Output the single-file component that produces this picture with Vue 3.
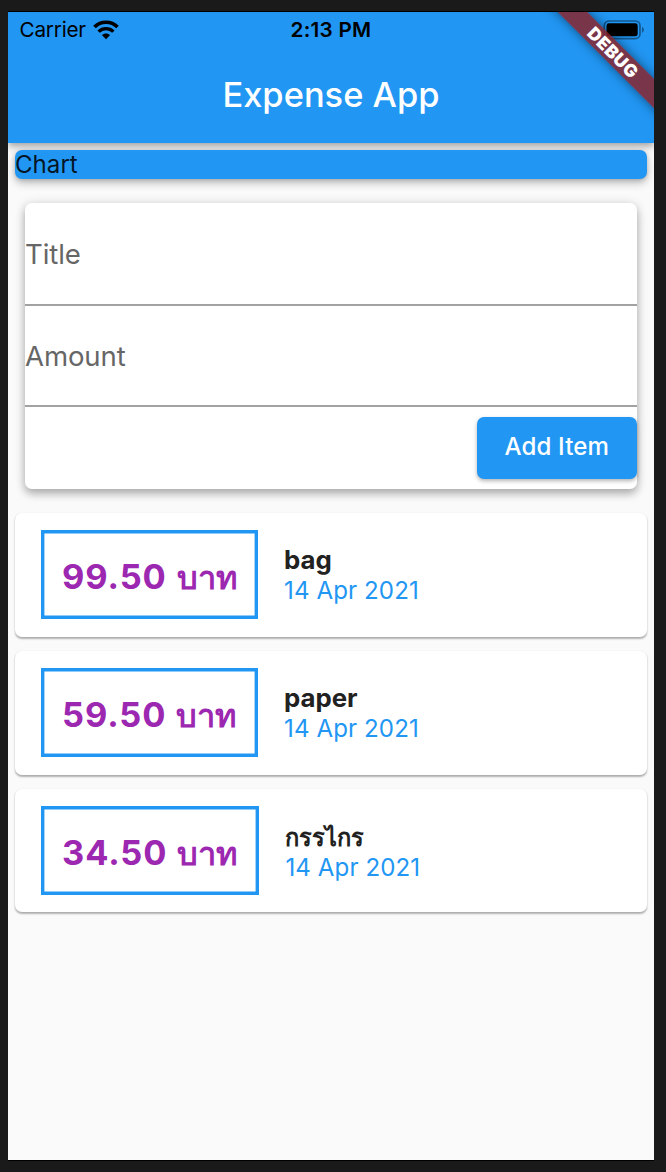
<script setup>
import { ref } from 'vue'

const title = ref('')
const amount = ref('')

const transactions = ref([
  { id: 1, title: 'bag', amount: 99.5, date: '14 Apr 2021', boxWidth: 217 },
  { id: 2, title: 'paper', amount: 59.5, date: '14 Apr 2021', boxWidth: 217 },
  { id: 3, title: 'กรรไกร', amount: 34.5, date: '14 Apr 2021', boxWidth: 218.4 }
])

const isThai = (text) => /[\u0E00-\u0E7F]/.test(text)

const addItem = () => {
  const value = Number(amount.value)
  if (!title.value || !(value > 0)) return

  transactions.value.push({
    id: Date.now(),
    title: title.value,
    amount: value,
    date: '14 Apr 2021',
    boxWidth: 217
  })
  title.value = ''
  amount.value = ''
}
</script>

<template>
  <div class="simulator">
    <div class="screen">
      <header class="app-bar">
        <div class="status">
          <div class="status__left">
            <span class="status__carrier">Carrier</span>
            <svg class="status__wifi" width="26" height="20" viewBox="0 0 26 20">
              <path d="M1.5 7.1C7.7 .6 18.3 .6 24.5 7.1" fill="none" stroke="#000" stroke-width="3.6" />
              <path d="M5.6 11.6C9.7 7.6 16.3 7.6 20.4 11.6" fill="none" stroke="#000" stroke-width="3.4" />
              <path d="M13 19.3L8.9 15.1C11.2 13 14.8 13 17.1 15.1Z" />
            </svg>
          </div>
          <span class="status__time">2:13 PM</span>
          <svg class="status__battery" width="42" height="20" viewBox="0 0 42 20">
            <rect x="1.2" y="1" width="35.8" height="17.6" rx="4.6" fill="none" stroke="#000" stroke-opacity=".42" stroke-width="1.7" />
            <rect x="3.5" y="3.3" width="31.2" height="13" rx="2.4" />
            <path d="M39.2 6.8C41.2 7.6 41.2 12 39.2 12.8Z" fill-opacity=".5" />
          </svg>
        </div>
        <h1 class="app-bar__title">Expense App</h1>
      </header>

      <main class="body">
        <section class="chart">Chart</section>

        <form class="entry" @submit.prevent="addItem">
          <input v-model="title" class="entry__field" placeholder="Title">
          <input v-model="amount" class="entry__field" placeholder="Amount">
          <button class="entry__button" type="submit">Add Item</button>
        </form>

        <ul class="list">
          <li v-for="tx in transactions" :key="tx.id" class="item">
            <div class="item__amount" :style="{ width: tx.boxWidth + 'px' }">
              <span class="item__number">{{ tx.amount.toFixed(2) }}</span>
              <span class="item__currency">บาท</span>
            </div>
            <div class="item__info">
              <div class="item__title" :class="{ 'item__title--thai': isThai(tx.title) }">{{ tx.title }}</div>
              <div class="item__date">{{ tx.date }}</div>
            </div>
          </li>
        </ul>
      </main>

      <div class="debug"><span>DEBUG</span></div>
    </div>
  </div>
</template>

<style>
body {
  margin: 0;
  background: #1a1a1a;
}
</style>

<style scoped>
.simulator {
  box-sizing: border-box;
  width: 666px;
  height: 1172px;
  padding: 11px 12px 11px 8px;
  background: #1a1a1a;
  font-family: Inter, "Noto Sans", sans-serif;
}

.screen {
  position: relative;
  overflow: hidden;
  height: 1148px;
  border-top: 1px solid #000;
  border-bottom: 1px solid #000;
  background: #fafafa;
}

/* App bar */
.app-bar {
  height: 131px;
  background: #2196f3;
  box-shadow: 0 3px 7px rgba(0, 0, 0, 0.3), 0 1px 14px rgba(0, 0, 0, 0.12);
}

.status {
  display: grid;
  grid-template-columns: 1fr auto 1fr;
  align-items: center;
  height: 36px;
  padding: 0 9px 0 11.5px;
  color: #000;
}

.status__left {
  display: flex;
  align-items: center;
  gap: 7.5px;
}

.status__carrier {
  margin-top: -1px;
  font-size: 20.7px;
  letter-spacing: -0.2px;
}

.status__time {
  margin: -1px 2.5px 0 0;
  font-size: 20.7px;
  font-weight: 600;
  letter-spacing: 0.25px;
}

.status__battery {
  justify-self: end;
}

.app-bar__title {
  margin: 0;
  line-height: 93px;
  font-size: 34.45px;
  font-weight: 500;
  letter-spacing: 0;
  text-align: center;
  color: #fff;
}

/* Content */
.body {
  padding: 7px 7px 0;
}

.chart {
  height: 29px;
  border-radius: 7px;
  background: #2196f3;
  box-shadow: 0 4px 8px rgba(0, 0, 0, 0.25), 0 1px 4px rgba(0, 0, 0, 0.15);
  line-height: 29px;
  font-size: 24.1px;
  letter-spacing: 0;
  color: rgba(0, 0, 0, 0.87);
}

.entry {
  display: flex;
  flex-direction: column;
  height: 286px;
  margin: 24px 10px;
  border-radius: 7px;
  background: #fff;
  box-shadow: 0 5px 9px rgba(0, 0, 0, 0.25), 0 1px 12px rgba(0, 0, 0, 0.14);
}

.entry__field {
  box-sizing: border-box;
  width: 100%;
  height: 101px;
  padding: 0;
  border: 0;
  border-bottom: 2px solid #a2a2a2;
  outline: 0;
  background: transparent;
  font: 27.56px Inter, sans-serif;
  letter-spacing: -0.1px;
  color: rgba(0, 0, 0, 0.87);
}

.entry__field:first-child {
  height: 103px;
}

.entry__field::placeholder {
  opacity: 1;
  color: #666;
}

.entry__button {
  align-self: flex-end;
  width: 160.5px;
  height: 62px;
  margin-top: 9.5px;
  padding: 0 0 2px;
  border: 0;
  border-radius: 7px;
  background: #2196f3;
  box-shadow: 0 2px 4px rgba(0, 0, 0, 0.3);
  font: 500 24.1px Inter, sans-serif;
  letter-spacing: 0.15px;
  color: #fff;
}

.list {
  display: flex;
  flex-direction: column;
  gap: 14px;
  margin: 0;
  padding: 0;
  list-style: none;
}

.item {
  display: flex;
  align-items: center;
  box-sizing: border-box;
  height: 123.8px;
  padding-left: 26px;
  border-radius: 7px;
  background: #fff;
  box-shadow: 0 1.7px 2px rgba(0, 0, 0, 0.28), 0 1px 2px rgba(0, 0, 0, 0.06);
}

/* The frame is an inset shadow so that it keeps its fractional width */
.item__amount {
  display: flex;
  align-items: baseline;
  box-sizing: border-box;
  flex: none;
  height: 89px;
  margin-right: 26px;
  padding-left: 21px;
  box-shadow: inset 0 0 0 3.4px #2196f3;
  line-height: 93px;
  font-size: 34.45px;
  font-weight: 600;
  color: #9c27b0;
  white-space: nowrap;
}

.item__number {
  font-weight: 700;
  letter-spacing: 0.9px;
}

.item__currency {
  margin-left: 10px;
  font-size: 32.6px;
}

.item__title {
  height: 31px;
  line-height: 29px;
  font-size: 25.8px;
  font-weight: 700;
  letter-spacing: 0;
  color: #212121;
}

.item__title--thai {
  height: 34px;
  line-height: 37px;
  font-size: 23.6px;
  font-weight: 600;
}

.item__date {
  line-height: 29px;
  font-size: 24.1px;
  letter-spacing: 0.1px;
  color: #2196f3;
}

/* Corner banner */
.debug {
  position: absolute;
  top: 30px;
  right: -79px;
  width: 240px;
  height: 21px;
  transform: rotate(45deg);
  background: rgba(140, 34, 38, 0.83);
  box-shadow: 0 0 11px rgba(0, 0, 0, 0.5);
  line-height: 21px;
  font-size: 17.6px;
  font-weight: 900;
  letter-spacing: 0.5px;
  text-align: center;
  color: #fff;
}
</style>
